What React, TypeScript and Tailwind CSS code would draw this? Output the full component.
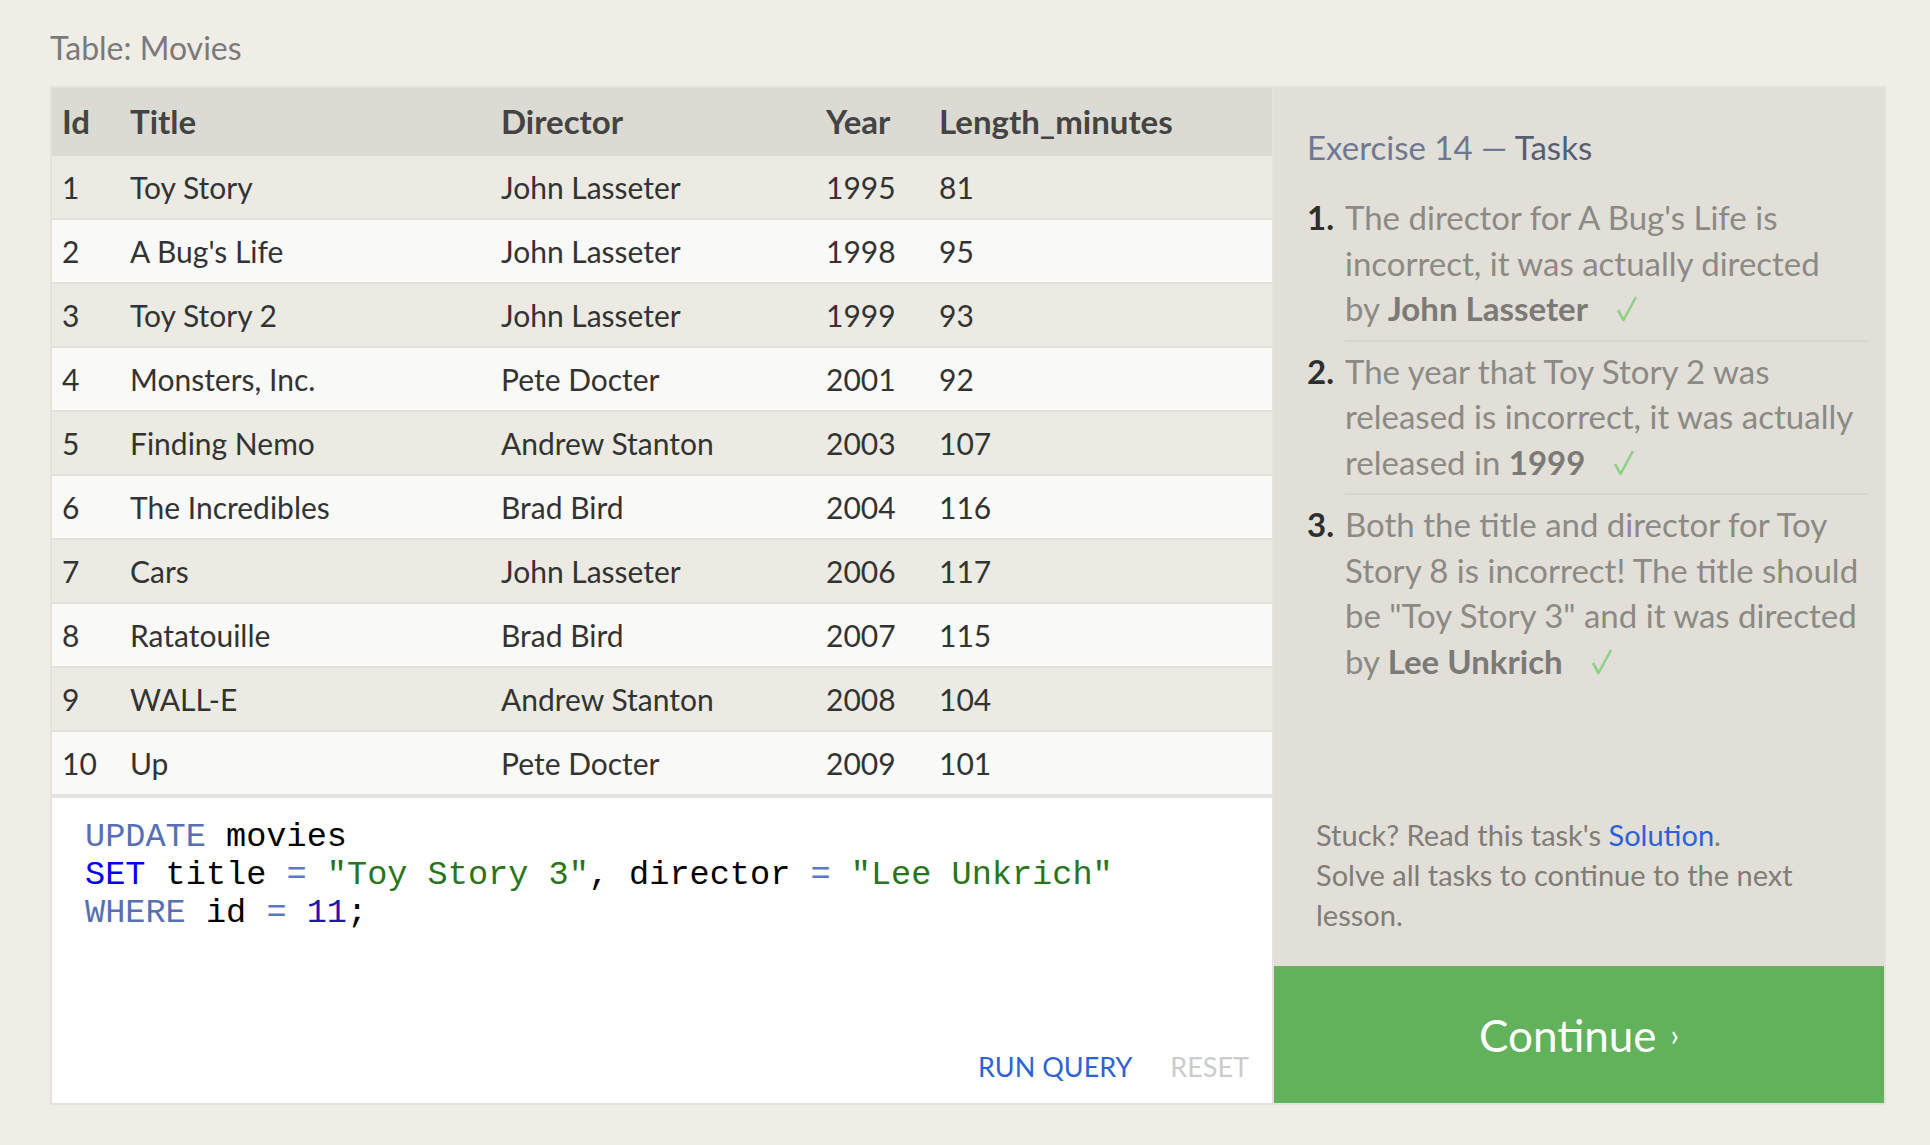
import React from 'react';

const movies = [
  [1, 'Toy Story', 'John Lasseter', 1995, 81],
  [2, "A Bug's Life", 'John Lasseter', 1998, 95],
  [3, 'Toy Story 2', 'John Lasseter', 1999, 93],
  [4, 'Monsters, Inc.', 'Pete Docter', 2001, 92],
  [5, 'Finding Nemo', 'Andrew Stanton', 2003, 107],
  [6, 'The Incredibles', 'Brad Bird', 2004, 116],
  [7, 'Cars', 'John Lasseter', 2006, 117],
  [8, 'Ratatouille', 'Brad Bird', 2007, 115],
  [9, 'WALL-E', 'Andrew Stanton', 2008, 104],
  [10, 'Up', 'Pete Docter', 2009, 101],
];

const cols = 'grid grid-cols-[68px_371px_325px_113px_1fr] items-center';

// light green tick after a solved task
const Check = () => (
  <svg className="inline-block ml-[28px] align-[-2px]" width="22" height="28" viewBox="0 0 22 28">
    <path d="M2 15 L7.5 25 L20 2" fill="none" stroke="#8fcf88" strokeWidth="2.6" strokeLinejoin="round" />
  </svg>
);

const App: React.FC = () => {
  return (
    <div className="min-h-screen bg-[#f0ede6] px-[50px] pt-[28px] font-['Lato',sans-serif]">
      <div className="text-[32px] leading-[40px] text-[#7a7a7a] mb-[18px]">Table: Movies</div>

      <div className="flex w-[1836px] border-2 border-[#e4e2dc]">
        {/* table + editor */}
        <div className="w-[1222px] border-r-2 border-[#e4e2dc] flex flex-col">
          <div className={`${cols} h-[68px] bg-[#dcdbd3] text-[#444] font-bold text-[33px]`}>
            {['Id', 'Title', 'Director', 'Year', 'Length_minutes'].map(h => (
              <div key={h} className="pl-[10px]">{h}</div>
            ))}
          </div>
          {movies.map((m, i) => (
            <div
              key={m[0]}
              className={`${cols} h-[64px] border-b-2 border-[#e2e1dc] text-[30px] text-[#333] ${i % 2 === 0 ? 'bg-[#ebeae3]' : 'bg-[#f9f9f8]'}`}
            >
              {m.map((v, j) => (
                <div key={j} className="pl-[10px]">{v}</div>
              ))}
            </div>
          ))}

          <div className="h-[307px] bg-white border-t-2 border-[#e6e5e1] flex flex-col">
            <pre className="pt-[20px] px-[33px] font-['Liberation_Mono',monospace] text-[33.6px] leading-[38px] text-black">
              <span className="text-[#5670b3]">UPDATE</span> movies{'\n'}
              <span className="text-[#0000ee]">SET</span> title <span className="text-[#5b78c6]">=</span>{' '}
              <span className="text-[#2a741c]">"Toy Story 3"</span>, director <span className="text-[#5b78c6]">=</span>{' '}
              <span className="text-[#2a741c]">"Lee Unkrich"</span>{'\n'}
              <span className="text-[#5670b3]">WHERE</span> id <span className="text-[#5b78c6]">=</span>{' '}
              <span className="text-[#1a1aa8]">11</span>;
            </pre>
            <div className="mt-auto flex justify-end gap-[38px] pr-[23px] pb-[18px] text-[27px] leading-[36px]">
              <button className="text-[#2d62d6]">RUN QUERY</button>
              <button className="text-[#cccccc]">RESET</button>
            </div>
          </div>
        </div>

        {/* tasks */}
        <div className="flex-1 bg-[#e1dfd8] flex flex-col">
          <div className="pt-[39px] pl-[33px] pr-[17px]">
            <h2 className="text-[33px] leading-[40px] text-[#6f7890]">
              Exercise 14 — <span className="text-[#555e72]">Tasks</span>
            </h2>
            <ol className="mt-[28px] text-[33px] leading-[45.5px] text-[#8b8a85]">
              <li className="grid grid-cols-[38px_1fr] mb-[7px]">
                <span className="font-bold text-[#2e2e2e]">1.</span>
                <div className="pb-[8px] border-b-2 border-[#d7d5cc] whitespace-nowrap">
                  <div>The director for A Bug's Life is</div>
                  <div>incorrect, it was actually directed</div>
                  <div>by <b className="text-[#7b7a76]">John Lasseter</b><Check /></div>
                </div>
              </li>
              <li className="grid grid-cols-[38px_1fr] mb-[7px]">
                <span className="font-bold text-[#2e2e2e]">2.</span>
                <div className="pb-[8px] border-b-2 border-[#d7d5cc] whitespace-nowrap">
                  <div>The year that Toy Story 2 was</div>
                  <div>released is incorrect, it was actually</div>
                  <div>released in <b className="text-[#7b7a76]">1999</b><Check /></div>
                </div>
              </li>
              <li className="grid grid-cols-[38px_1fr]">
                <span className="font-bold text-[#2e2e2e]">3.</span>
                <div className="whitespace-nowrap">
                  <div>Both the title and director for Toy</div>
                  <div>Story 8 is incorrect! The title should</div>
                  <div>be "Toy Story 3" and it was directed</div>
                  <div>by <b className="text-[#7b7a76]">Lee Unkrich</b><Check /></div>
                </div>
              </li>
            </ol>
          </div>

          <div className="mt-auto pl-[42px] pb-[31px] text-[29px] leading-[40px] text-[#807c77]">
            <div>Stuck? Read this task's <a className="text-[#2d62d6]">Solution</a>.</div>
            <div>Solve all tasks to continue to the next</div>
            <div>lesson.</div>
          </div>

          <button className="h-[137px] bg-[#61b25a] flex items-center justify-center text-white text-[44px]">
            Continue<span className="ml-[14px] text-[30px]">›</span>
          </button>
        </div>
      </div>
    </div>
  );
};

export default App;
